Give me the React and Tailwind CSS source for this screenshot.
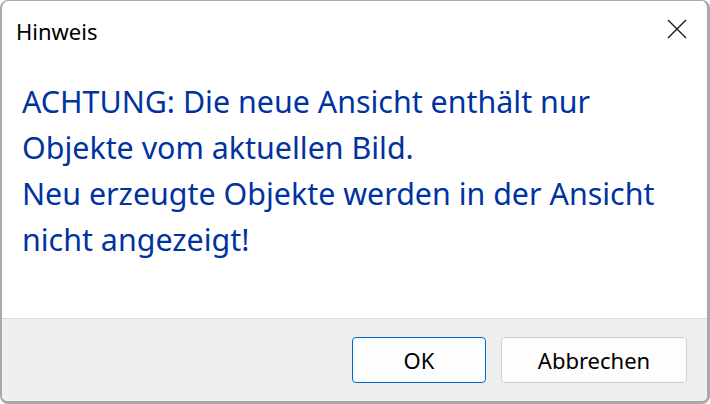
export default function App() {
  return (
    <div className="w-[710px] h-[404px] bg-white" style={{ fontFamily: '"Noto Sans", sans-serif' }}>
      <div className="w-full h-full flex flex-col rounded-[8px] border-l-2 border-t border-r-[3px] border-b-[3px] border-[#a9a9a9] overflow-hidden bg-white">
        {/* Titelleiste */}
        <div className="h-[62px] shrink-0 flex items-start justify-between pl-[14px] pr-[20px] pt-[18px]">
          <span className="text-[22px] text-black leading-[24px]">Hinweis</span>
          <svg width="20" height="20" viewBox="0 0 20 20">
            <path d="M1 1 L19 19 M19 1 L1 19" stroke="#1a1a1a" strokeWidth="1.4" fill="none" />
          </svg>
        </div>

        {/* Meldung */}
        <div className="flex-1 pl-[20px] pt-[16px] text-[#0033a0] text-[30.4px] leading-[46px] whitespace-nowrap">
          <p>ACHTUNG: Die neue Ansicht enthält nur</p>
          <p>Objekte vom aktuellen Bild.</p>
          <p>Neu erzeugte Objekte werden in der Ansicht</p>
          <p>nicht angezeigt!</p>
        </div>

        {/* Buttons */}
        <div className="h-[83px] shrink-0 bg-[#efefef] border-t border-[#dcdcdc] flex justify-end items-start pt-[18px] pr-[20px] gap-[15px]">
          <button className="w-[134px] h-[46px] rounded-[4px] bg-[#fdfdfd] border border-[#0067c0] text-[22px] text-black">
            OK
          </button>
          <button className="w-[186px] h-[46px] rounded-[4px] bg-[#fdfdfd] border border-[#d0d0d0] text-[22px] text-black">
            Abbrechen
          </button>
        </div>
      </div>
    </div>
  );
}
